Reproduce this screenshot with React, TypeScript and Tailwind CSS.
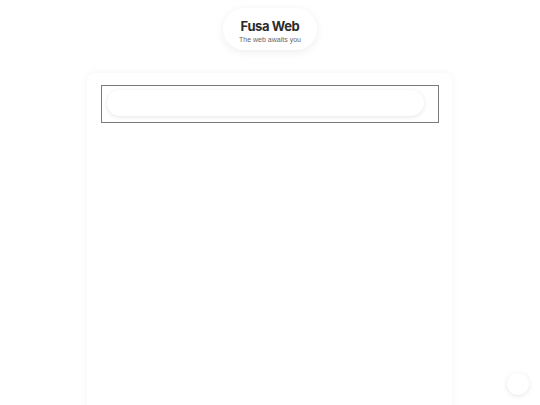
export default function App() {
  return (
    <div className="relative min-h-[405px] w-[540px] bg-white overflow-hidden" style={{ fontFamily: "'Liberation Sans', Arial, sans-serif" }}>
      <div className="flex justify-center pt-[8px]">
        <div className="flex h-[42px] w-[94px] flex-col items-center pt-[11px] rounded-full bg-white shadow-[0_2px_10px_rgba(0,0,0,0.07)]">
          <div className="text-[13px] font-bold leading-[15px] text-[#2b2b2b] tracking-[-0.4px]" style={{ fontFamily: "Inter, 'Liberation Sans', sans-serif" }}>Fusa Web</div>
          <div className="mt-[1px] text-[7px] leading-[9px] text-[#666]">The web awaits you</div>
        </div>
      </div>
      <div className="mx-auto mt-[23px] h-[340px] w-[365px] -translate-x-[1px] rounded-t-[8px] bg-white px-[14px] pt-[12px] shadow-[0_0_8px_rgba(0,0,0,0.05)]">
        <div className="h-[38px] w-[338px] border border-[#7a7a7a] pl-[5px] pt-[4px]">
          <div className="h-[26px] w-[317px] rounded-full bg-white shadow-[0_1px_4px_rgba(0,0,0,0.1)]"></div>
        </div>
      </div>
      <div className="absolute left-[507px] top-[373px] h-[22px] w-[22px] rounded-full bg-white shadow-[0_1px_5px_rgba(0,0,0,0.1)]"></div>
    </div>
  );
}
